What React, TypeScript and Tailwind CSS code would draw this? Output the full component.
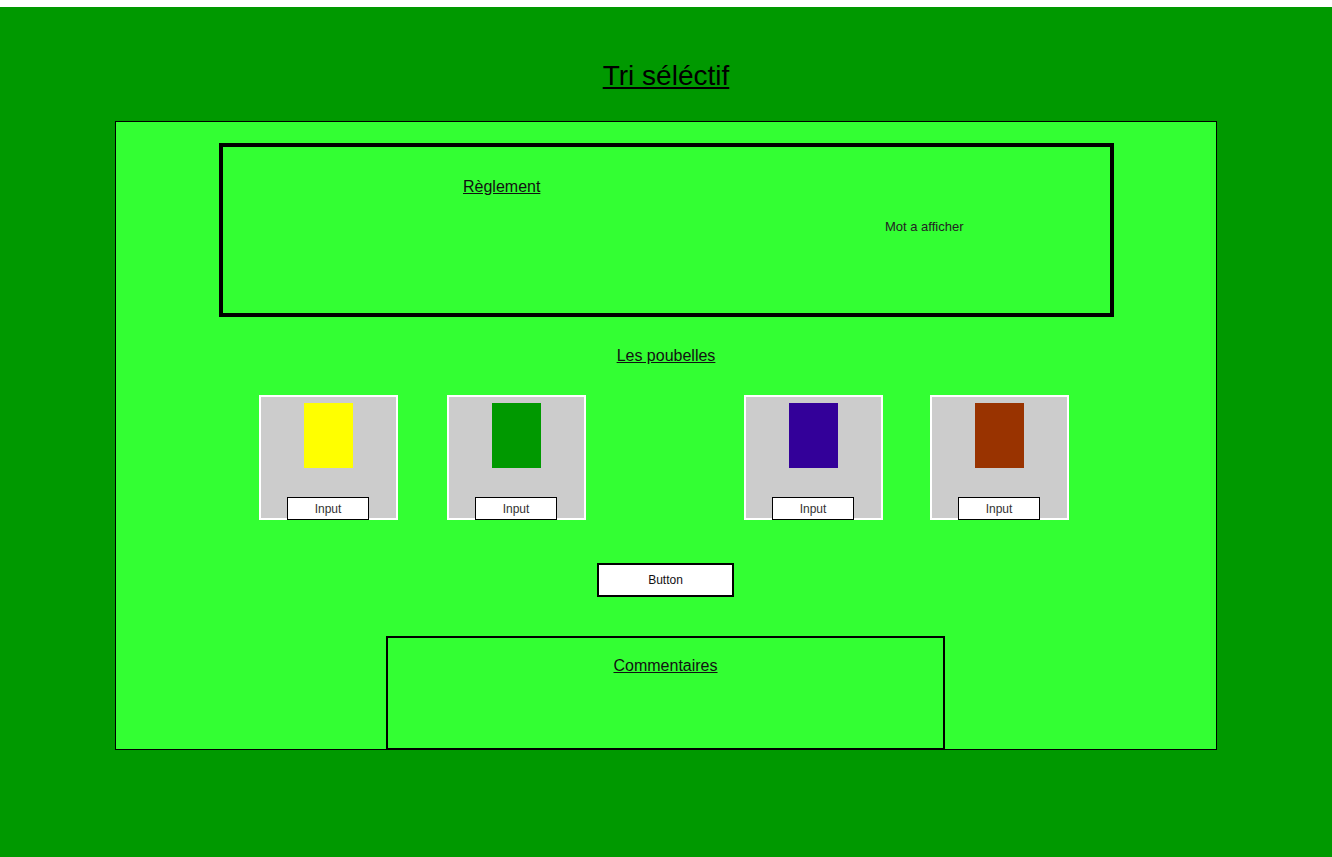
import React from 'react';

const bins = [
  { color: 'bg-[#ffff00]', gap: 'ml-0' },
  { color: 'bg-[#009900]', gap: 'ml-[49px]' },
  { color: 'bg-[#330099]', gap: 'ml-[158px]' },
  { color: 'bg-[#993300]', gap: 'ml-[47px]' },
];

const App: React.FC = () => {
  return (
    <div className="bg-white pt-[7px] font-['Liberation_Sans',Arial,sans-serif] text-black">
      <div className="h-[850px] bg-[#009900] flex flex-col items-center">
        <h1 className="mt-[53px] text-[28px] leading-[32px] underline">Tri séléctif</h1>

        {/* Main panel */}
        <div className="mt-[29px] w-[1102px] h-[629px] border border-black bg-[#33ff33] flex flex-col">
          {/* Règlement */}
          <div className="mt-[21px] ml-[103px] w-[895px] h-[174px] shrink-0 border-4 border-black pt-[31px]">
            <p className="ml-[240px] text-[16px] leading-[18px] text-[#111] underline">Règlement</p>
            <p className="ml-[662px] mt-[23px] text-[13px] leading-[15px] text-[#222]">Mot a afficher</p>
          </div>

          <h2 className="mt-[30px] self-center text-[16px] leading-[18px] text-[#111] underline">Les poubelles</h2>

          {/* Bins */}
          <div className="mt-[30px] flex pl-[143px]">
            {bins.map((bin, i) => (
              <div
                key={i}
                className={`${bin.gap} w-[139px] h-[125px] shrink-0 border-2 border-white bg-[#cccccc] flex flex-col`}
              >
                <div className={`mt-[6px] ml-[43px] w-[49px] h-[65px] shrink-0 ${bin.color}`}></div>
                <div className="mt-[29px] ml-[26px] w-[82px] h-[23px] shrink-0 border border-black bg-white flex items-center justify-center text-[12px] text-[#333]">
                  Input
                </div>
              </div>
            ))}
          </div>

          <button className="mt-[43px] ml-[481px] w-[137px] h-[34px] shrink-0 border-2 border-black bg-white text-[12px] text-[#111]">
            Button
          </button>

          {/* Commentaires */}
          <div className="mt-[39px] ml-[270px] w-[559px] h-[114px] shrink-0 border-2 border-black pt-[19px] flex justify-center">
            <p className="text-[16px] leading-[18px] text-[#111] underline">Commentaires</p>
          </div>
        </div>
      </div>
    </div>
  );
};

export default App;
